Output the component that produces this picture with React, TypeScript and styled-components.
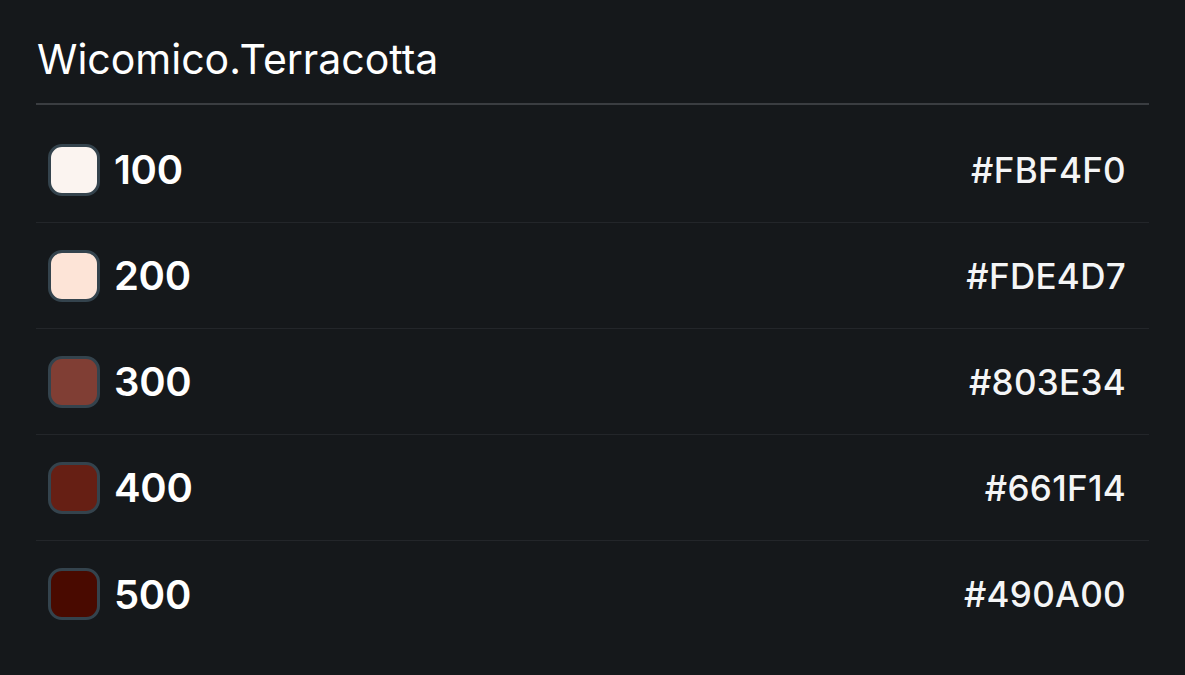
import styled, { createGlobalStyle } from 'styled-components';

const GlobalStyle = createGlobalStyle`
  html, body {
    margin: 0;
    padding: 0;
    background: #15181b;
  }
  body {
    font-family: Inter, "Liberation Sans", sans-serif;
    color: #ffffff;
  }
`;

interface Shade {
  step: string;
  hex: string;
}

const shades: Shade[] = [
  { step: '100', hex: '#FBF4F0' },
  { step: '200', hex: '#FDE4D7' },
  { step: '300', hex: '#803E34' },
  { step: '400', hex: '#661F14' },
  { step: '500', hex: '#490A00' },
];

const App = () => {
  return (
    <>
      <GlobalStyle />
      <Panel>
        <Title>Wicomico.Terracotta</Title>
        <List>
          {shades.map(shade => (
            <Row key={shade.step}>
              <Swatch $color={shade.hex} />
              <Step>{shade.step}</Step>
              <Hex>{shade.hex}</Hex>
            </Row>
          ))}
        </List>
      </Panel>
    </>
  );
};

const Panel = styled.div`
  display: flex;
  flex-direction: column;
  width: 1185px;
  height: 675px;
  box-sizing: border-box;
  padding: 35px 36px 0 36px;
  background: #15181b;
`;

const Title = styled.h1`
  margin: 0;
  padding: 0 0 20px 1px;
  font-size: 41px;
  font-weight: 400;
  line-height: 48px;
  letter-spacing: 0;
  color: #ffffff;
  border-bottom: 2px solid #3a3d41;
`;

const List = styled.ul`
  display: flex;
  flex-direction: column;
  margin: 0;
  padding: 12px 0 0 0;
  list-style: none;
`;

const Row = styled.li`
  display: flex;
  align-items: center;
  gap: 14px;
  box-sizing: border-box;
  height: 106px;
  padding: 0 23px 0 12px;
  border-bottom: 1px solid #23262a;

  &:last-child {
    border-bottom: none;
  }
`;

const Swatch = styled.span<{ $color: string }>`
  flex: none;
  width: 46px;
  height: 46px;
  border-radius: 14px;
  border: 3px solid #34434d;
  background: ${p => p.$color};
`;

const Step = styled.span`
  flex: 1;
  font-size: 40px;
  font-weight: 600;
  letter-spacing: -0.3px;
`;

const Hex = styled.span`
  font-size: 35px;
  font-weight: 500;
  letter-spacing: 0.3px;
  color: #f4f5f6;
`;

export default App;
